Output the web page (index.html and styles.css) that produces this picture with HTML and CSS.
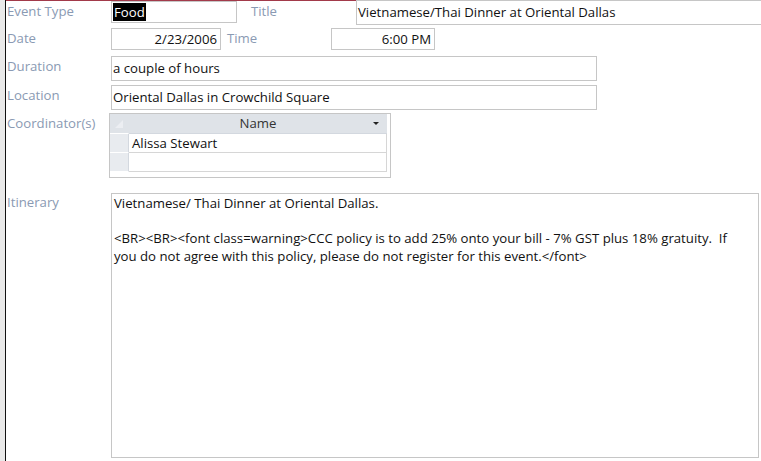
FILE: index.html
```html
<!DOCTYPE html>
<html lang="en">
<head>
    <meta charset="UTF-8">
    <title>Event Details</title>
    <link rel="stylesheet" href="styles.css">
</head>
<body>
    <div class="frame">
        <div class="gutter"></div>
        <div class="form">
            <div class="row row-1">
                <span class="label">Event Type</span>
                <div class="field f-type"><span class="selected">Food</span></div>
                <span class="label label-title">Title</span>
                <div class="field f-title">Vietnamese/Thai Dinner at Oriental Dallas</div>
            </div>
            <div class="row row-2">
                <span class="label">Date</span>
                <div class="field f-date right">2/23/2006</div>
                <span class="label label-time">Time</span>
                <div class="field f-time right">6:00 PM</div>
            </div>
            <div class="row row-3">
                <span class="label">Duration</span>
                <div class="field f-wide">a couple of hours</div>
            </div>
            <div class="row row-4">
                <span class="label">Location</span>
                <div class="field f-wide">Oriental Dallas in Crowchild Square</div>
            </div>
            <div class="row row-5">
                <span class="label">Coordinator(s)</span>
                <div class="subform">
                    <div class="sheet">
                        <div class="sheet-head">
                            <div class="selector corner"></div>
                            <div class="col-head">Name <span class="arrow"></span></div>
                        </div>
                        <div class="sheet-row">
                            <div class="selector"></div>
                            <div class="cell">Alissa Stewart</div>
                        </div>
                        <div class="sheet-row">
                            <div class="selector"></div>
                            <div class="cell"></div>
                        </div>
                    </div>
                </div>
            </div>
            <div class="row row-6">
                <span class="label">Itinerary</span>
                <div class="field memo">
                    <p>Vietnamese/ Thai Dinner at Oriental Dallas.</p>
                    <p>&lt;BR&gt;&lt;BR&gt;&lt;font class=warning&gt;CCC policy is to add 25% onto your bill - 7% GST plus 18% gratuity.&nbsp; If you do not agree with this policy, please do not register for this event.&lt;/font&gt;</p>
                </div>
            </div>
        </div>
    </div>
</body>
</html>
```

FILE: styles.css
```css
body {
    margin: 0;
    font-family: "Open Sans", "Noto Sans", sans-serif;
    font-size: 13.2px;
    color: #111;
    background: #fff;
    overflow: hidden;
}
.frame {
    display: flex;
    height: 461px;
}
.gutter {
    width: 5px;
    background: #e9e9e9;
    border-right: 1px solid #111;
    flex: none;
}
.form {
    flex: 1;
    border-top: 1px solid #a23a4a;
    padding-left: 1px;
}
.row {
    display: flex;
    align-items: flex-start;
}
.label {
    width: 104px;
    flex: none;
    color: #8a9ab3;
    line-height: 20px;
}
.row-1 { height: 24px; }
.row-2 { margin-top: 3px; height: 22px; }
.row-3 { margin-top: 6px; }
.row-4 { margin-top: 4px; }
.row-5 { margin-top: 3px; }
.row-6 { margin-top: 15px; }
.row-6 .label { margin-top: -1px; }
.field {
    border: 1px solid #c6c6c6;
    box-sizing: border-box;
    height: 22px;
    line-height: 20px;
    padding: 0 3px 0 1px;
    white-space: nowrap;
    overflow: hidden;
}
.right { text-align: right; }
.f-type { width: 126px; }
.selected {
    background: #000;
    color: #fff;
    padding: 0 1px;
}
.label-title {
    width: 105px;
    margin-left: 14px;
}
.f-title {
    flex: 1;
    height: 25px;
    margin-top: -1px;
    border-right: none;
    padding-top: 1px;
}
.f-date { width: 110px; }
.label-time {
    width: 104px;
    margin-left: 6px;
}
.f-time { width: 104px; }
.f-wide {
    width: 486px;
    height: 25px;
    line-height: 22px;
}
.subform {
    margin-left: -2px;
    width: 282px;
    height: 65px;
    border: 1px solid #c6c6c6;
    box-sizing: border-box;
}
.sheet {
    width: 277px;
}
.sheet-head {
    display: flex;
    height: 20px;
    background: #dfe3e8;
}
.sheet-row {
    display: flex;
    height: 19px;
}
.selector {
    width: 18px;
    flex: none;
    background: #e8ebef;
    border-right: 1px solid #d3d8df;
    border-bottom: 1px solid #fff;
    position: relative;
}
.corner {
    background: #dfe3e8;
    border-right: 1px solid #dfe3e8;
}
.corner::after {
    content: "";
    position: absolute;
    left: 5px;
    bottom: 5px;
    width: 0;
    height: 0;
    border-left: 8px solid transparent;
    border-bottom: 8px solid #eceef2;
}
.col-head {
    flex: 1;
    text-align: center;
    color: #333;
    line-height: 19px;
    position: relative;
    border-bottom: 1px solid #d3d8df;
}
.arrow {
    position: absolute;
    right: 8px;
    top: 8px;
    border-left: 3px solid transparent;
    border-right: 3px solid transparent;
    border-top: 3px solid #222;
}
.cell {
    flex: 1;
    border-bottom: 1px solid #d6d6d6;
    border-right: 1px solid #d6d6d6;
    line-height: 18px;
    padding-left: 3px;
}
.memo {
    width: 648px;
    height: 265px;
    white-space: normal;
    line-height: 17.5px;
    padding: 1px 16px 0 2px;
}
.memo p {
    margin: 0 0 17.5px;
}
```
